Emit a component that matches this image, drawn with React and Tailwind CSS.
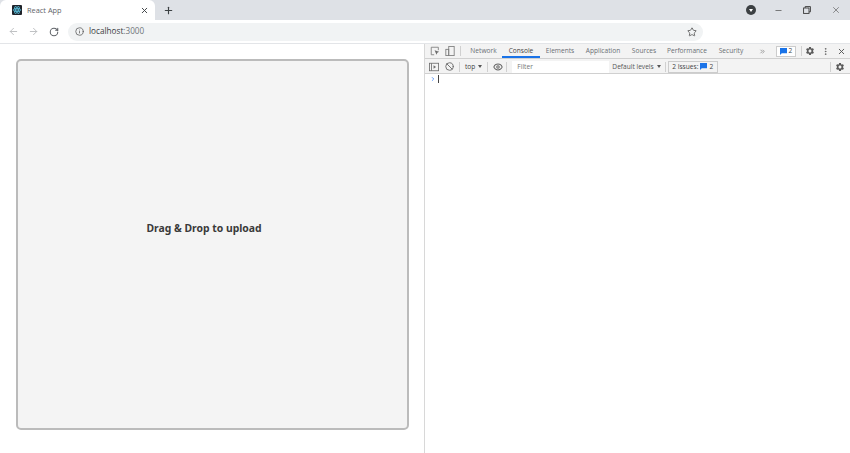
import React from 'react';
import { ArrowLeft, ArrowRight, RotateCw, Info, Star, Plus, X, Minus, Ban, Eye, MoreVertical, ChevronsRight, ChevronRight } from 'lucide-react';
import { MdSettings } from 'react-icons/md';

const sans = 'font-["Open_Sans","Noto_Sans",sans-serif]';

function ReactLogo() {
  return (
    <div className="w-[10px] h-[10px] rounded-[1px] bg-[#20232a] flex items-center justify-center">
      <svg viewBox="0 0 20 20" className="w-[10px] h-[10px]" fill="none" stroke="#61dafb" strokeWidth="1.2">
        <ellipse cx="10" cy="10" rx="8" ry="3.2" />
        <ellipse cx="10" cy="10" rx="8" ry="3.2" transform="rotate(60 10 10)" />
        <ellipse cx="10" cy="10" rx="8" ry="3.2" transform="rotate(120 10 10)" />
        <circle cx="10" cy="10" r="1.6" fill="#61dafb" stroke="none" />
      </svg>
    </div>
  );
}

function MessageBadge() {
  return (
    <svg viewBox="0 0 8 8" className="w-[7px] h-[7px]">
      <path d="M0 0h8v6H2L0 8z" fill="#1a73e8" />
    </svg>
  );
}

function InspectIcon() {
  return (
    <svg viewBox="0 0 12 12" className="w-[10px] h-[10px]" fill="none" stroke="#7a7a7a" strokeWidth="1">
      <path d="M5 10.5H1.5v-9h8.5V5" />
      <path d="M5.5 5l5.5 2-2.2 1-1 2.4z" fill="#6e6e6e" stroke="none" />
    </svg>
  );
}

function DeviceIcon() {
  return (
    <svg viewBox="0 0 12 12" className="w-[10px] h-[10px]" fill="none" stroke="#7a7a7a" strokeWidth="1">
      <rect x="4.5" y="0.5" width="6.5" height="11" />
      <rect x="1" y="4" width="3.5" height="7.5" />
    </svg>
  );
}

function DrawerIcon() {
  return (
    <svg viewBox="0 0 12 12" className="w-[10px] h-[10px]" fill="none" stroke="#6e6e6e" strokeWidth="1">
      <rect x="0.5" y="1.5" width="11" height="9" />
      <path d="M3 1.5v9" />
      <path d="M5.5 4l3 2-3 2z" fill="#6e6e6e" stroke="none" />
    </svg>
  );
}

function RestoreIcon() {
  return (
    <svg viewBox="0 0 10 10" className="w-[8px] h-[8px]" fill="none" stroke="#444" strokeWidth="1.2">
      <rect x="0.7" y="2.5" width="6.8" height="6.8" />
      <path d="M2.7 2.5V0.7h6.6v6.6H7.5" />
    </svg>
  );
}

function ProfileIcon() {
  return (
    <div className="w-[10px] h-[10px] rounded-full bg-[#3c4043] flex items-center justify-center">
      <span className="w-0 h-0 border-x-[2.5px] border-x-transparent border-t-[3px] border-t-white" />
    </div>
  );
}

function DevTab({ label, active, w }) {
  return (
    <div className={`${w} h-full flex items-center justify-center text-[6.6px] border-y-2 border-t-transparent ${active ? 'text-[#444] border-b-[#1a73e8]' : 'text-[#6a6e73] border-b-transparent'}`}>
      {label}
    </div>
  );
}

function Divider() {
  return <div className="w-px h-[10px] bg-[#d0d0d0]" />;
}

export default function App() {
  return (
    <div className={`w-[850px] h-[453px] bg-white overflow-hidden flex flex-col ${sans}`}>
      {/* tab strip */}
      <div className="h-[20px] bg-[#dee1e6] flex items-center shrink-0">
        <div className="w-[155px] h-full bg-white rounded-t-[6px] flex items-center pl-[12px] pr-[6px] gap-[5px]">
          <ReactLogo />
          <span className="text-[7.4px] text-[#5f6368] flex-1 pt-px">React App</span>
          <X className="w-[9px] h-[9px] text-[#3c4043]" strokeWidth={2.5} />
        </div>
        <Plus className="w-[11px] h-[11px] ml-[8px] text-[#3c4043]" strokeWidth={2.5} />
        <div className="ml-auto flex items-center">
          <ProfileIcon />
          <Minus className="w-[9px] h-[9px] ml-[18px] text-[#555]" />
          <div className="ml-[20px]"><RestoreIcon /></div>
          <X className="w-[10px] h-[10px] ml-[20px] mr-[9px] text-[#555]" strokeWidth={1.5} />
        </div>
      </div>

      {/* address bar */}
      <div className="h-[24px] bg-white border-b border-[#e3e5e8] flex items-center shrink-0">
        <ArrowLeft className="w-[11px] h-[11px] ml-[8px] text-[#babcbe]" />
        <ArrowRight className="w-[11px] h-[11px] ml-[9px] text-[#babcbe]" />
        <RotateCw className="w-[10px] h-[10px] ml-[10px] text-[#5f6368]" strokeWidth={2.5} />
        <div className="ml-[9px] w-[635px] h-[18px] rounded-full bg-[#f1f3f4] flex items-center pl-[7px] pr-[6px]">
          <Info className="w-[9px] h-[9px] text-[#555]" />
          <span className="ml-[5px] text-[8.2px] text-[#3c4043] flex-1">localhost<span className="text-[#70757a]">:3000</span></span>
          <Star className="w-[10px] h-[10px] text-[#555]" />
        </div>
      </div>

      <div className="flex-1 flex min-h-0">
        {/* page */}
        <div className="w-[424px] shrink-0 pt-[15px] pl-[16px]">
          <div className="w-[393px] h-[371px] bg-[#f4f4f4] border-2 border-[#bbbbbb] rounded-[5px] flex items-center justify-center pr-[17px] pb-[31px]">
            <span className='font-["Noto_Sans",sans-serif] font-bold text-[10.4px] text-[#3a3a3a]'>Drag &amp; Drop to upload</span>
          </div>
        </div>

        {/* devtools */}
        <div className="flex-1 border-l border-[#d8d8d8] flex flex-col">
          <div className="h-[15px] bg-[#f3f3f3] border-b border-[#d0d0d0] flex items-center">
            <div className="pl-[5px] flex items-center gap-[5px]">
              <InspectIcon />
              <DeviceIcon />
              <Divider />
            </div>
            <div className="ml-[4px] h-full flex items-center">
              <DevTab label="Network" w="w-[37px]" />
              <DevTab label="Console" w="w-[38px]" active />
              <DevTab label="Elements" w="w-[40px]" />
              <DevTab label="Application" w="w-[46px]" />
              <DevTab label="Sources" w="w-[36px]" />
              <DevTab label="Performance" w="w-[50px]" />
              <DevTab label="Security" w="w-[38px]" />
            </div>
            <ChevronsRight className="w-[7px] h-[7px] ml-[9px] text-[#666]" />
            <div className="ml-[10px] w-[20px] h-[11px] border border-[#ccc] flex items-center justify-center gap-[2px] bg-white text-[6.6px] text-[#444]">
              <MessageBadge />2
            </div>
            <div className="ml-[5px]"><Divider /></div>
            <MdSettings className="w-[10px] h-[10px] ml-[3px] text-[#5a5a5a]" />
            <MoreVertical className="w-[9px] h-[9px] ml-[6px] text-[#5a5a5a]" />
            <X className="w-[9px] h-[9px] ml-[7px] mr-[4px] text-[#555]" strokeWidth={2.5} />
          </div>

          <div className="h-[15px] bg-[#f3f3f3] border-b border-[#d0d0d0] flex items-center pt-px">
            <div className="ml-[4px]"><DrawerIcon /></div>
            <Ban className="w-[9px] h-[9px] ml-[6px] text-[#6e6e6e]" strokeWidth={2.5} />
            <div className="ml-[5px]"><Divider /></div>
            <span className="ml-[5px] text-[6.6px] text-[#444]">top</span>
            <span className="ml-[3px] w-0 h-0 border-x-[2px] border-x-transparent border-t-[3px] border-t-[#555]" />
            <div className="ml-[5px]"><Divider /></div>
            <Eye className="w-[10px] h-[10px] ml-[5px] text-[#666]" strokeWidth={2.5} />
            <div className="ml-[3px]"><Divider /></div>
            <div className="ml-[5px] w-[97px] h-[12px] bg-white flex items-center pl-[5px] text-[6.6px] text-[#757575]">Filter</div>
            <span className="ml-[3px] text-[6.6px] text-[#555]">Default levels</span>
            <span className="ml-[3px] w-0 h-0 border-x-[2px] border-x-transparent border-t-[3px] border-t-[#555]" />
            <div className="ml-[4px]"><Divider /></div>
            <div className="ml-[2px] w-[50px] h-[12px] border border-[#ccc] flex items-center justify-center gap-[2px] text-[6.6px] text-[#444]">
              2 Issues: <MessageBadge /> 2
            </div>
            <div className="ml-auto"><Divider /></div>
            <MdSettings className="w-[10px] h-[10px] ml-[4px] mr-[5px] text-[#5a5a5a]" />
          </div>

          <div className="flex items-center h-[11px] pl-[5px] -mt-px">
            <ChevronRight className="w-[6px] h-[6px] text-[#367cf1]" strokeWidth={3} />
            <div className="ml-[2px] w-px h-[8px] bg-[#444]" />
          </div>
        </div>
      </div>
    </div>
  );
}
